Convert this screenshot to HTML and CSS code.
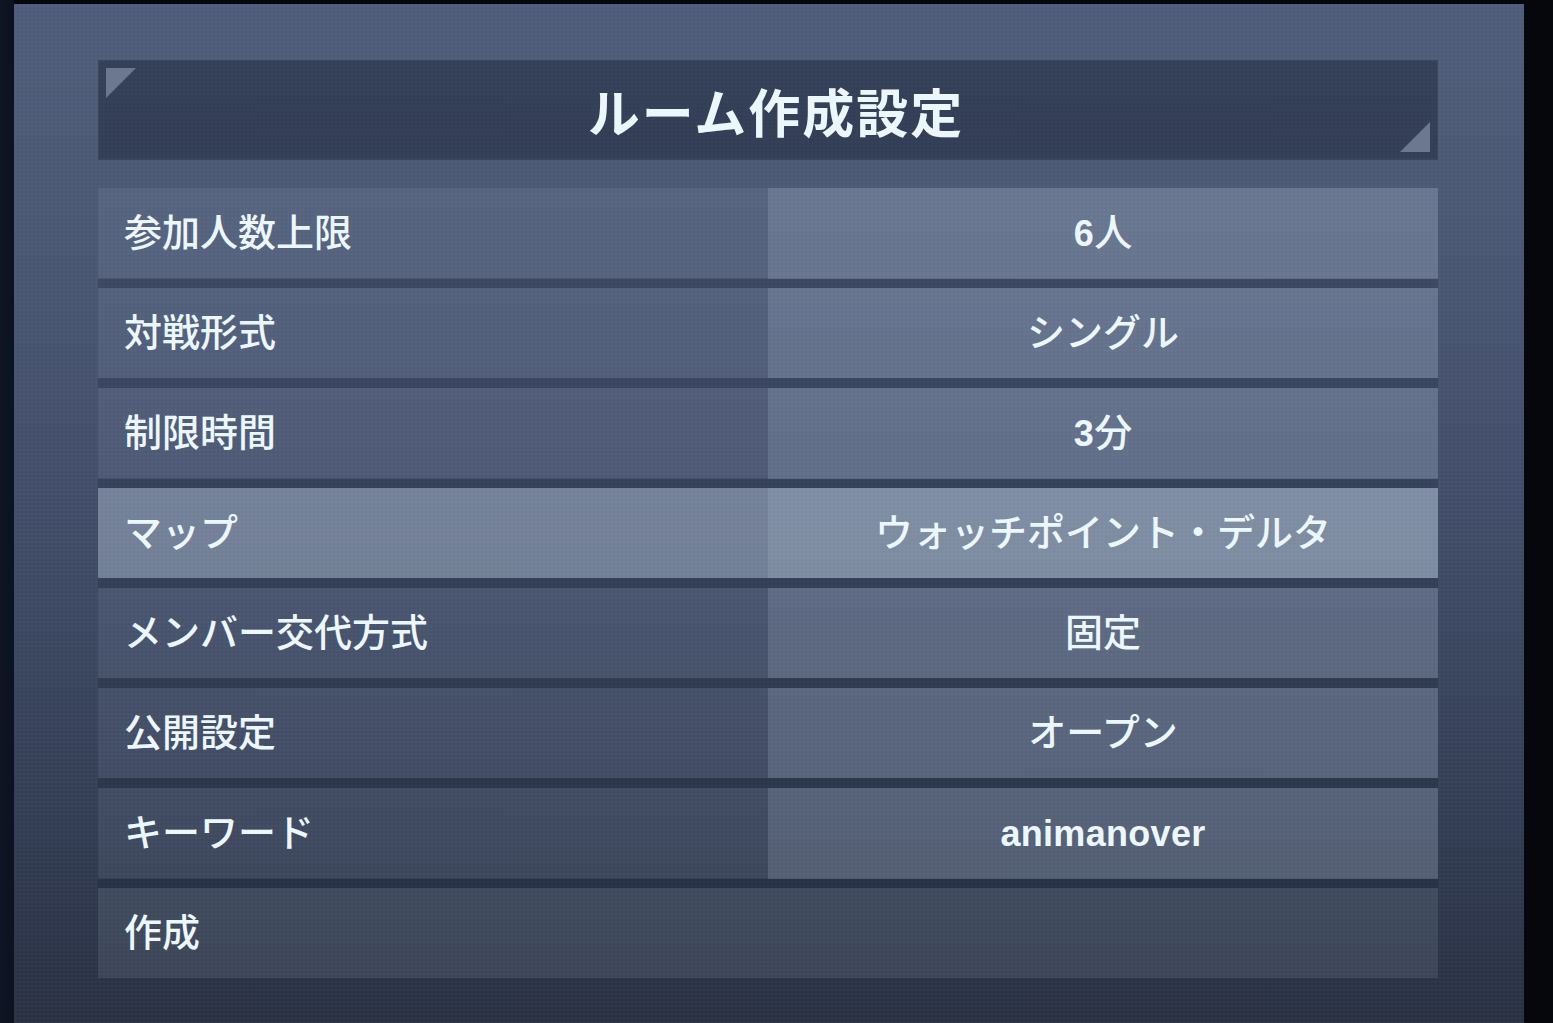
FILE: index.html
```html
<!DOCTYPE html>
<html lang="ja">
	<head>
		<meta charset="UTF-8">
		<title>ルーム作成設定</title>
		<link rel="stylesheet" href="styles.css">
	</head>
	<body>
		<div class="screen">
			<div class="panel">
				<div class="title-bar">
					<span class="corner corner-tl"></span>
					<h1>ルーム作成設定</h1>
					<span class="corner corner-br"></span>
				</div>
				<ul class="settings">
					<li class="row"><span class="label">参加人数上限</span><span class="value"><span class="en">6</span>人</span></li>
					<li class="row"><span class="label">対戦形式</span><span class="value">シングル</span></li>
					<li class="row"><span class="label">制限時間</span><span class="value"><span class="en">3</span>分</span></li>
					<li class="row active"><span class="label">マップ</span><span class="value">ウォッチポイント・デルタ</span></li>
					<li class="row"><span class="label">メンバー交代方式</span><span class="value">固定</span></li>
					<li class="row"><span class="label">公開設定</span><span class="value">オープン</span></li>
					<li class="row"><span class="label">キーワード</span><span class="value"><span class="en">animanover</span></span></li>
					<li class="row single"><span class="label">作成</span></li>
				</ul>
			</div>
			<div class="backdrop"></div>
		</div>
	</body>
</html>
```

FILE: styles.css
```css
*{
	margin: 0;
	padding: 0;
	box-sizing: border-box;
}
body{
	background: #070a12;
	overflow: hidden;
	font-family: "Liberation Sans", "Noto Sans CJK JP", sans-serif;
	color: #ecf7fc;
}

.screen{
	display: flex;
	height: 1023px;
	padding-top: 4px;
	background: linear-gradient(90deg, #0f1524 0, #0d1220 14px, #05070c 14px);
}

.panel{
	width: 1510px;
	margin-left: 14px;
	padding: 56px 86px 0 84px;
	background:
		radial-gradient(rgba(255,255,255,0.035) 1px, transparent 1.5px) 0 0 / 4px 4px,
		linear-gradient(180deg, #4f5d7a 0%, #4a5773 25%, #414d68 50%, #37425a 72%, #293143 100%);
}
.backdrop{
	flex: 1;
	background: #05070c;
}

/* title */
.title-bar{
	position: relative;
	height: 100px;
	display: flex;
	align-items: center;
	justify-content: center;
	background: rgba(22,30,48,0.45);
	border: 1px solid rgba(255,255,255,0.04);
}
.title-bar h1{
	font-family: "Noto Sans CJK JP", sans-serif;
	font-size: 52px;
	font-weight: 700;
	line-height: 1;
	letter-spacing: 2px;
	padding-left: 16px;
	margin-top: 2px;
}
.corner{
	position: absolute;
	width: 30px;
	height: 30px;
	background: #6b7890;
}
.corner-tl{
	top: 7px;
	left: 7px;
	clip-path: polygon(0 0, 100% 0, 0 100%);
}
.corner-br{
	bottom: 7px;
	right: 7px;
	clip-path: polygon(100% 0, 100% 100%, 0 100%);
}

/* rows */
.settings{
	list-style: none;
	margin-top: 28px;
	display: flex;
	flex-direction: column;
	gap: 10px;
}
.row{
	height: 90px;
	display: grid;
	grid-template-columns: 670px 670px;
	box-shadow: 0 10px 0 rgba(12,18,34,0.2);
	font-size: 38px;
	font-weight: 500;
	line-height: 90px;
}
.label{
	padding-left: 26px;
	background: rgba(220,232,250,0.08);
}
.value{
	text-align: center;
	background: rgba(196,215,235,0.24);
}
.value .en{
	font-size: 36px;
	font-weight: 700;
	letter-spacing: 0.3px;
}
.row.active .label{
	background: rgba(205,222,238,0.36);
}
.row.active .value{
	background: rgba(205,222,238,0.44);
}
.row.single{
	grid-template-columns: 1340px;
	box-shadow: none;
}
.row.single .label{
	background: rgba(220,232,250,0.1);
}
```
